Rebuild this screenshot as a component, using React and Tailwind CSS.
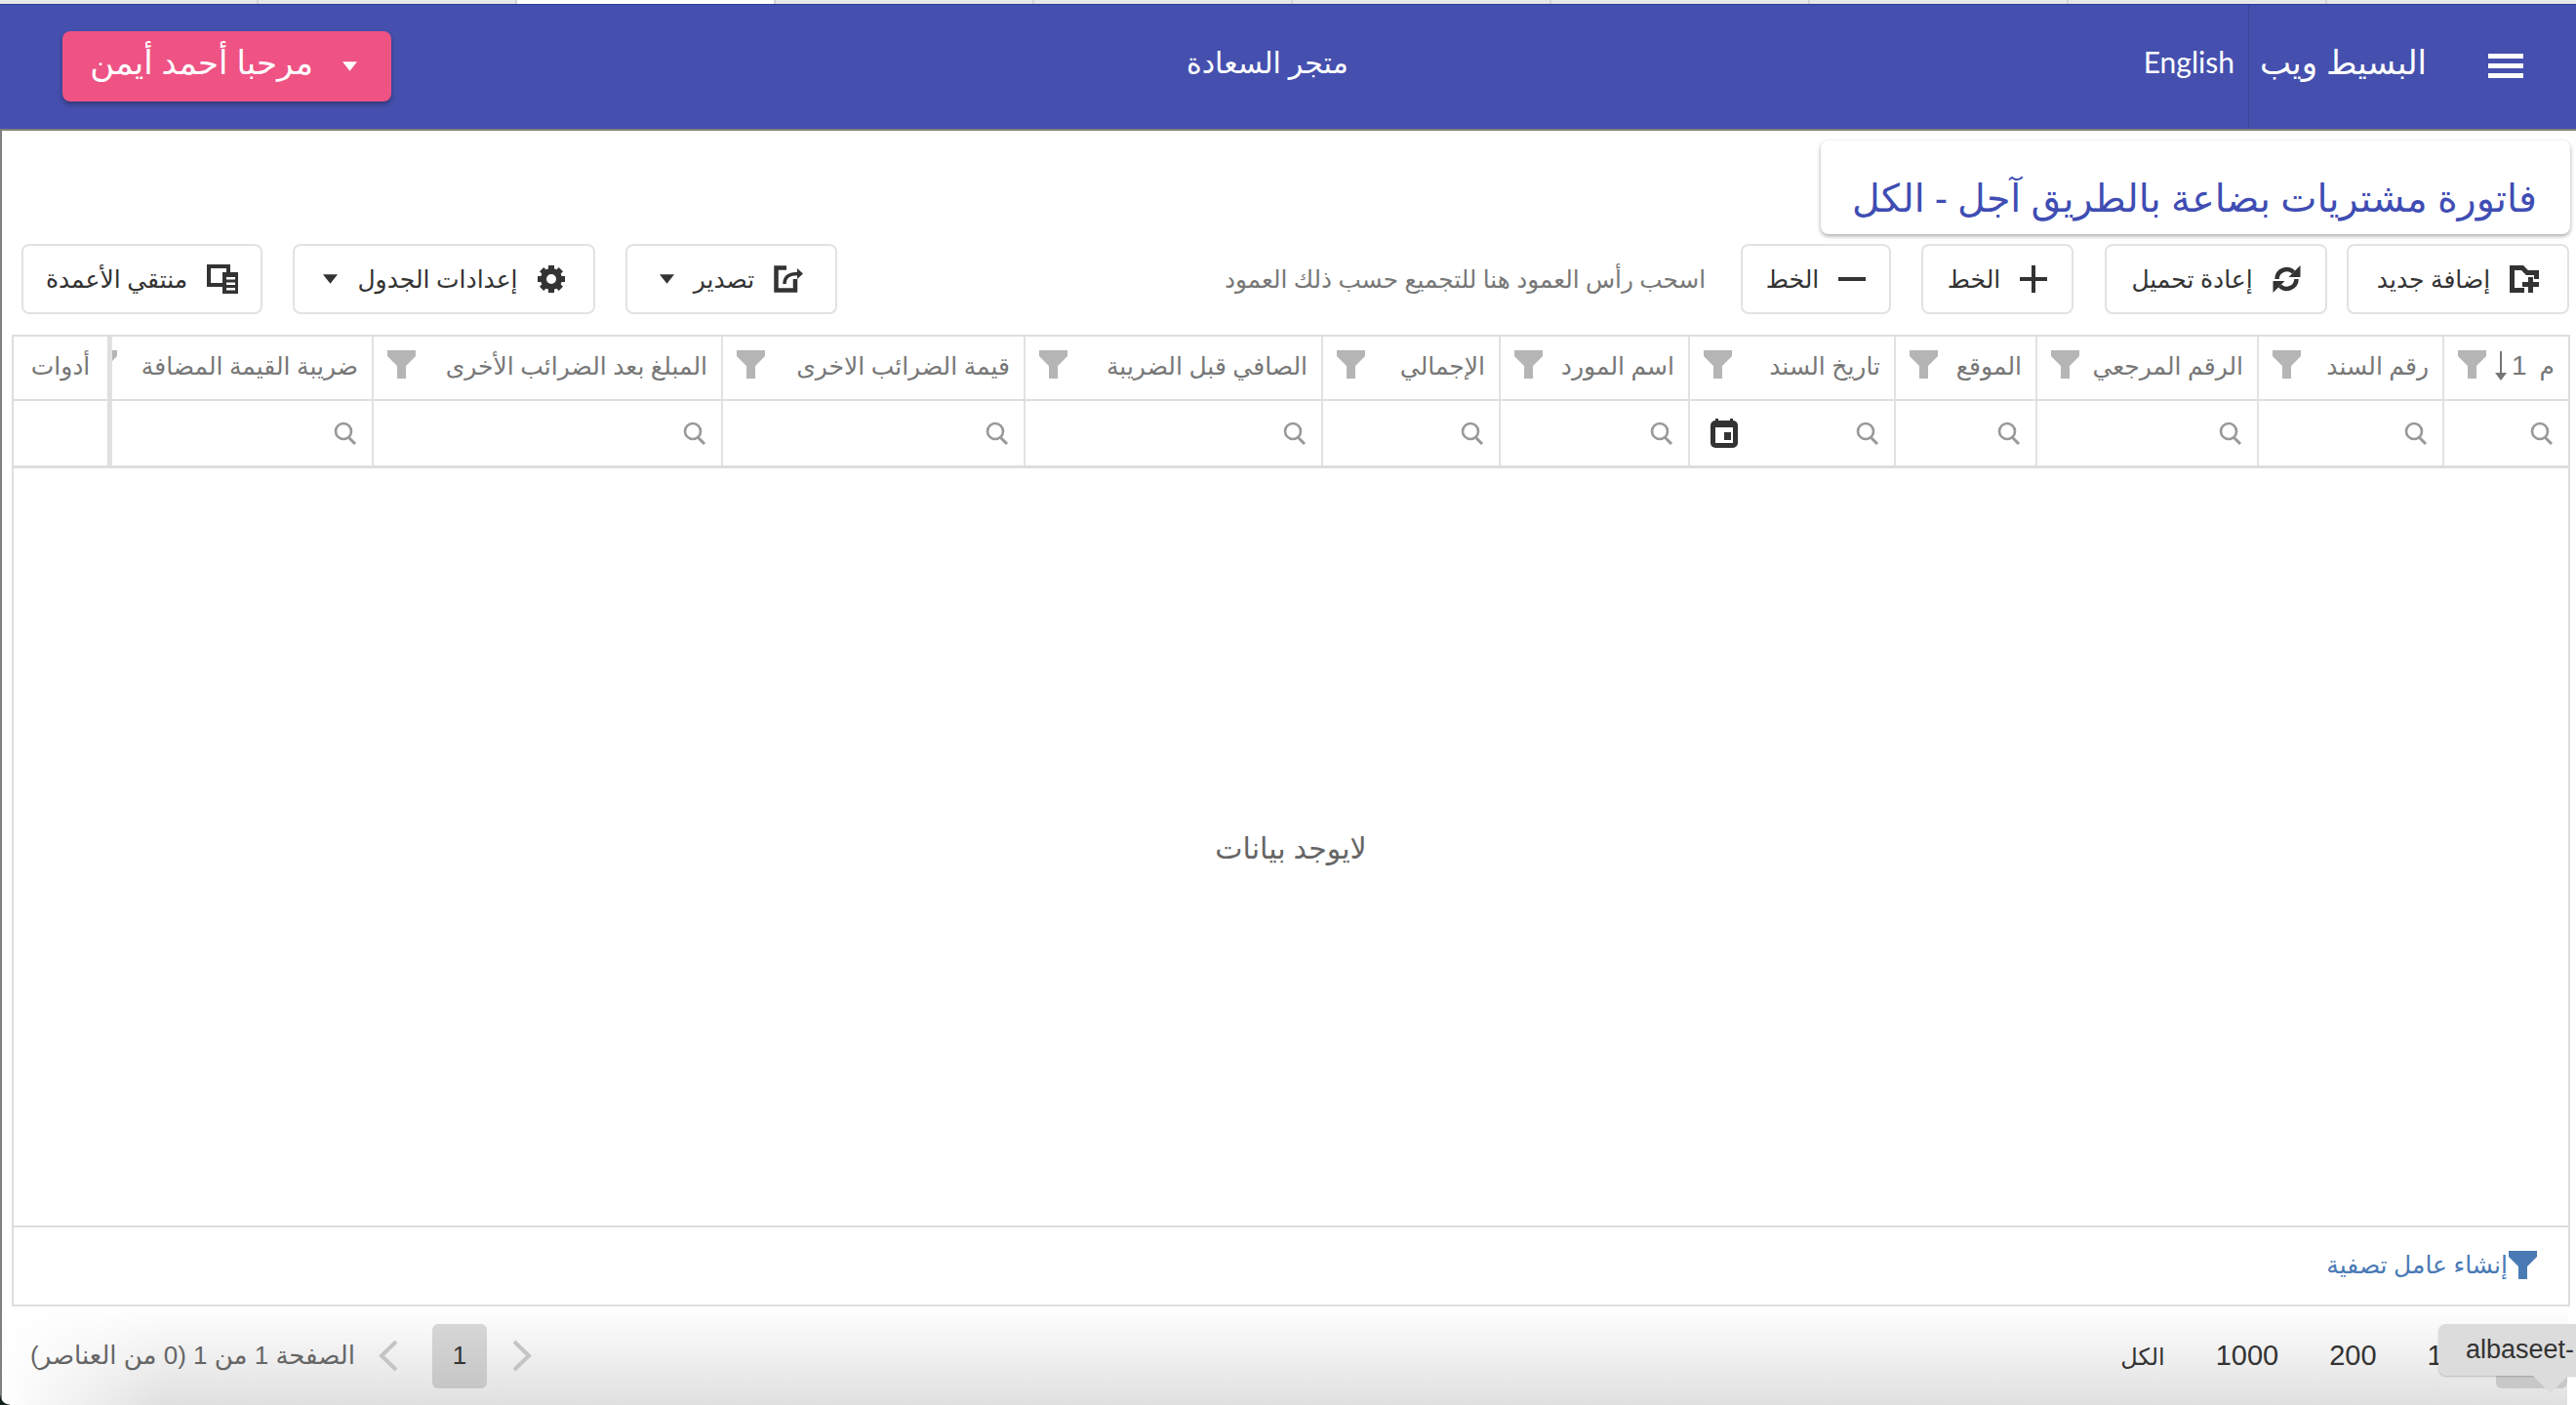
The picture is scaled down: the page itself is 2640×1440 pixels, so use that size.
import React from 'react';

const FONT = "font-['Noto_Sans','DejaVu_Sans',sans-serif]";

const tabs = [0, 1, 2, 3, 4, 5, 6, 7, 8, 9];

const columns = [
    { label: 'م', width: 'w-[129px]', sorted: true },
    { label: 'رقم السند', width: 'w-[190px]' },
    { label: 'الرقم المرجعي', width: 'w-[227px]' },
    { label: 'الموقع', width: 'w-[145px]' },
    { label: 'تاريخ السند', width: 'w-[211px]', date: true },
    { label: 'اسم المورد', width: 'w-[194px]' },
    { label: 'الإجمالي', width: 'w-[182px]' },
    { label: 'الصافي قبل الضريبة', width: 'w-[305px]' },
    { label: 'قيمة الضرائب الاخرى', width: 'w-[310px]' },
    { label: 'المبلغ بعد الضرائب الأخرى', width: 'w-[358px]' },
    { label: 'ضريبة القيمة المضافة', width: 'w-[268px]', clipped: true },
];

function Caret({ className = 'fill-[#333]' }) {
    return (
        <svg viewBox="0 0 16 10" className={`w-[15px] h-[10px] shrink-0 ${className}`}>
            <polygon points="0,0 16,0 8,10" />
        </svg>
    );
}

function Funnel({ className = 'fill-[#b5b5b5]' }) {
    return (
        <svg viewBox="0 0 29 29" className={`w-[29px] h-[29px] shrink-0 ${className}`}>
            <path d="M0 0H29V6L19 16V29H10V16L0 6Z" />
        </svg>
    );
}

function SearchIcon() {
    return (
        <svg viewBox="0 0 24 24" className="w-[24px] h-[24px] stroke-[#999] fill-none">
            <circle cx="10" cy="10" r="8" strokeWidth="2.6" />
            <line x1="15" y1="16" x2="22" y2="23" strokeWidth="3" />
        </svg>
    );
}

function AddFolderIcon() {
    return (
        <svg viewBox="0 0 30 28" className="w-[30px] h-[28px] fill-[#333]">
            <path d="M0 0H14L19 5H30V14H25V10H17L12 5H5V23H15V28H0Z" />
            <rect x="13" y="17" width="17" height="5" />
            <rect x="19" y="12" width="5" height="16" />
        </svg>
    );
}

function RefreshIcon() {
    return (
        <svg viewBox="0 0 28 28" className="w-[29px] h-[28px] fill-[#333] stroke-[#333]">
            <path d="M4 14A10 10 0 0 1 21 7" fill="none" strokeWidth="4.5" />
            <polygon points="28,0 28,12 16,12" stroke="none" />
            <path d="M24 14A10 10 0 0 1 7 21" fill="none" strokeWidth="4.5" />
            <polygon points="0,28 0,16 12,16" stroke="none" />
        </svg>
    );
}

function PlusIcon() {
    return (
        <svg viewBox="0 0 28 28" className="w-[28px] h-[28px] fill-[#333]">
            <rect x="0" y="12" width="28" height="4" />
            <rect x="12" y="0" width="4" height="28" />
        </svg>
    );
}

function MinusIcon() {
    return (
        <svg viewBox="0 0 28 28" className="w-[28px] h-[28px] fill-[#333]">
            <rect x="0" y="12" width="28" height="4" />
        </svg>
    );
}

function ExportIcon() {
    return (
        <svg viewBox="0 0 30 28" className="w-[30px] h-[28px] fill-[#333] stroke-[#333]">
            <path d="M13 2.5H2.5V25.5H22V14" fill="none" strokeWidth="4.5" />
            <path d="M11 19C11 12 15 8.5 25 8.5" fill="none" strokeWidth="3.5" />
            <polygon points="24,3 30,8.5 24,14" stroke="none" />
        </svg>
    );
}

function GearIcon() {
    return (
        <svg viewBox="0 0 28 28" className="w-[28px] h-[28px]">
            <circle cx="14" cy="14" r="8" fill="none" stroke="#333" strokeWidth="6" />
            {[0, 45, 90, 135, 180, 225, 270, 315].map((deg) => (
                <rect key={deg} x="11" y="0" width="6" height="6" fill="#333" transform={`rotate(${deg} 14 14)`} />
            ))}
        </svg>
    );
}

function ColumnsIcon() {
    return (
        <svg viewBox="0 0 32 30" className="w-[32px] h-[30px]">
            <rect x="2" y="2" width="20" height="19" fill="none" stroke="#333" strokeWidth="4" />
            <rect x="16" y="8" width="16" height="22" fill="#333" />
            <rect x="20" y="13" width="9" height="2.5" fill="#fff" />
            <rect x="20" y="18.5" width="9" height="2.5" fill="#fff" />
            <rect x="20" y="24" width="9" height="2.5" fill="#fff" />
        </svg>
    );
}

function CalendarIcon() {
    return (
        <svg viewBox="0 0 28 30" className="w-[28px] h-[30px] shrink-0">
            <rect x="5" y="0" width="3" height="4" fill="#333" />
            <rect x="20" y="0" width="3" height="4" fill="#333" />
            <rect x="0" y="2" width="28" height="28" rx="5" fill="#333" />
            <rect x="5" y="9" width="18" height="16" fill="#fff" />
            <rect x="14" y="14" width="7" height="8" fill="#333" />
        </svg>
    );
}

function SortDownIcon() {
    return (
        <svg viewBox="0 0 12 30" className="w-[12px] h-[30px] fill-[#777]">
            <rect x="5" y="0" width="2" height="26" />
            <polygon points="0,22 12,22 6,30" />
        </svg>
    );
}

function Chevron({ points }) {
    return (
        <svg viewBox="0 0 21 33" className="w-[21px] h-[33px] fill-none stroke-[#c4c4c4]">
            <polyline points={points} strokeWidth="4" />
        </svg>
    );
}

function ToolButton({ width, children }) {
    return (
        <button className={`${width} h-[72px] shrink-0 flex items-center justify-center gap-[20px] rounded-[8px] border-2 border-[#e2e2e2] bg-white text-[25px] text-[#333] whitespace-nowrap`}>
            {children}
        </button>
    );
}

export default function App() {
    return (
        <div dir="rtl" className={`${FONT} relative w-[2640px] h-[1440px] overflow-hidden flex flex-col bg-white`}>
            {/* Browser tabs peeking in at the top */}
            <div dir="ltr" className="flex h-[4px] shrink-0 bg-[#e8e8e8]">
                {tabs.map((t) => (
                    <div key={t} className={`w-[265px] shrink-0 border-r-2 border-[#d5d5d5] ${t === 2 ? 'bg-white' : ''}`} />
                ))}
            </div>

            {/* Header */}
            <header className="h-[130px] shrink-0 flex items-center bg-[#4550ae] border-t border-[#2f3d9a] border-b-2 border-b-[#808080] pb-[2px] pl-[64px] text-white">
                <div className="flex flex-col gap-[5px] mr-[54px] w-[36px] shrink-0">
                    <span className="h-[5px] bg-white" />
                    <span className="h-[5px] bg-white" />
                    <span className="h-[5px] bg-white" />
                </div>
                <div className="h-full flex items-center border-l border-[#3a4599] mr-[63px] pl-[11px] pb-[8px] text-[34px] whitespace-nowrap">
                    البسيط ويب
                </div>
                <span className="mr-[14px] pb-[8px] text-[30px] font-['Lato',sans-serif]">English</span>
                <div className="flex-1 pb-[8px] text-center text-[30px]">متجر السعادة</div>
                <button className="w-[337px] h-[72px] flex items-center pr-[35px] pb-[8px] gap-[30px] rounded-[8px] bg-[#ee5384] shadow-[0_3px_5px_rgba(0,0,0,0.3)] text-[34px] whitespace-nowrap">
                    <Caret className="fill-white mt-[8px]" />
                    مرحبا أحمد أيمن
                </button>
            </header>

            {/* Page title */}
            <div className="shrink-0 mt-[10px] mr-[6px] w-[768px] h-[96px] flex items-end pb-[8px] pr-[34px] rounded-[8px] bg-white shadow-[0_2px_4px_rgba(0,0,0,0.35)] text-[39.5px] text-[#3f4db3] whitespace-nowrap">
                فاتورة مشتريات بضاعة بالطريق آجل - الكل
            </div>

            {/* Toolbar */}
            <div className="shrink-0 mt-[10px] mr-[7px] ml-[22px] flex items-center">
                <ToolButton width="w-[228px]"><AddFolderIcon />إضافة جديد</ToolButton>
                <div className="w-[20px] shrink-0" />
                <ToolButton width="w-[228px]"><RefreshIcon />إعادة تحميل</ToolButton>
                <div className="w-[32px] shrink-0" />
                <ToolButton width="w-[156px]"><PlusIcon />الخط</ToolButton>
                <div className="w-[31px] shrink-0" />
                <ToolButton width="w-[154px]"><MinusIcon />الخط</ToolButton>
                <span className="mr-[36px] text-[24.7px] text-[#777] whitespace-nowrap">اسحب رأس العمود هنا للتجميع حسب ذلك العمود</span>
                <div className="mr-auto flex items-center gap-[31px]">
                    <ToolButton width="w-[217px]"><ExportIcon />تصدير<Caret /></ToolButton>
                    <ToolButton width="w-[310px]"><GearIcon />إعدادات الجدول<Caret /></ToolButton>
                    <ToolButton width="w-[247px]"><ColumnsIcon />منتقي الأعمدة</ToolButton>
                </div>
            </div>

            {/* Grid */}
            <div className="shrink-0 mt-[21px] mr-[6px] ml-[12px] h-[996px] flex flex-col border-2 border-[#dedede] text-[25px] text-[#777]">
                <div className="flex h-[66px] shrink-0 border-b-2 border-[#dedede]">
                    {columns.map((c) => (
                        <div key={c.label} className={`${c.width} shrink-0 overflow-hidden flex items-center justify-between px-[14px] border-l-2 border-[#e2e2e2] whitespace-nowrap`}>
                            <div className="flex items-center gap-[13px] pb-[5px]">
                                <span>{c.label}</span>
                                {c.sorted && (
                                    <>
                                        <span className="text-[28px] font-['Liberation_Sans',sans-serif]">1</span>
                                        <div className="-mr-[8px]">
                                            <SortDownIcon />
                                        </div>
                                    </>
                                )}
                            </div>
                            <div className={`self-start mt-[14px] ${c.clipped ? '-ml-[38px]' : ''}`}>
                                <Funnel />
                            </div>
                        </div>
                    ))}
                    <div className="flex-1 flex items-center justify-center pb-[5px] border-r-[3px] border-[#dedede]">أدوات</div>
                </div>
                <div className="flex h-[69px] shrink-0 border-b-[3px] border-[#dedede]">
                    {columns.map((c) => (
                        <div key={c.label} className={`${c.width} shrink-0 flex items-center justify-between px-[15px] border-l-2 border-[#e2e2e2]`}>
                            <SearchIcon />
                            {c.date && <div className="-ml-[-6px]"><CalendarIcon /></div>}
                        </div>
                    ))}
                    <div className="flex-1 border-r-[3px] border-[#dedede]" />
                </div>
                <div className="flex-1 flex items-center justify-center text-[30px] text-[#666]">لايوجد بيانات</div>
                <div className="h-[81px] shrink-0 flex items-center pr-[32px] pb-[3px] gap-[1px] border-t-2 border-[#dedede] text-[25px] text-[#4a7ab5]">
                    <Funnel className="fill-[#4a7ab5]" />
                    إنشاء عامل تصفية
                </div>
            </div>

            {/* Pager */}
            <div className="relative flex-1 flex items-center mr-[9px] pl-[31px] bg-linear-to-b from-white to-[#e0e0e0] text-[29px] text-[#333] font-['Liberation_Sans','DejaVu_Sans',sans-serif]">
                <div className="w-[73px] h-[66px] rounded-[6px] bg-[#c8c8c8]" />
                <div className="flex items-center gap-[52px] mr-[22px]">
                    <span>100</span>
                    <span>200</span>
                    <span>1000</span>
                    <span className={`${FONT} text-[24px]`}>الكل</span>
                </div>
                <div className="relative z-10 mr-auto flex items-center">
                    <Chevron points="3,2 18,16.5 3,31" />
                    <div className="w-[56px] h-[66px] mr-[25px] flex items-center justify-center rounded-[6px] bg-linear-to-b from-[#d6d6d6] to-[#c6c6c6] text-[26px]">1</div>
                    <div className="mr-[34px]">
                        <Chevron points="18,2 3,16.5 18,31" />
                    </div>
                    <span className="mr-[24px] text-[26px] text-[#666] whitespace-nowrap">الصفحة 1 من 1 (0 من العناصر)</span>
                </div>
                {/* Soft fade in the lower left corner */}
                <div className="absolute left-0 top-0 bottom-0 w-[170px] bg-linear-to-r from-white to-transparent" />
            </div>

            {/* Window edge on the left */}
            <div className="absolute left-0 top-[134px] bottom-0 w-[2px] bg-[#808080]" />
            <div className="absolute left-0 bottom-0 w-[10px] h-[10px] bg-[radial-gradient(circle_at_100%_0,transparent_9px,#10201a_10px)]" />

            {/* Browser status tooltip */}
            <div dir="ltr" className="absolute left-[2499px] top-[1357px] w-[160px] h-[53px] flex items-center pl-[28px] rounded-[8px] bg-[#dcdcdc] shadow-[0_1px_2px_rgba(0,0,0,0.2)] text-[27px] text-[#333] font-['Liberation_Sans',sans-serif] whitespace-nowrap">
                albaseet-
            </div>
            <div className="absolute left-[2596px] top-[1410px] w-0 h-0 border-x-[18px] border-x-transparent border-t-[18px] border-t-[#dcdcdc]" />
        </div>
    );
}
